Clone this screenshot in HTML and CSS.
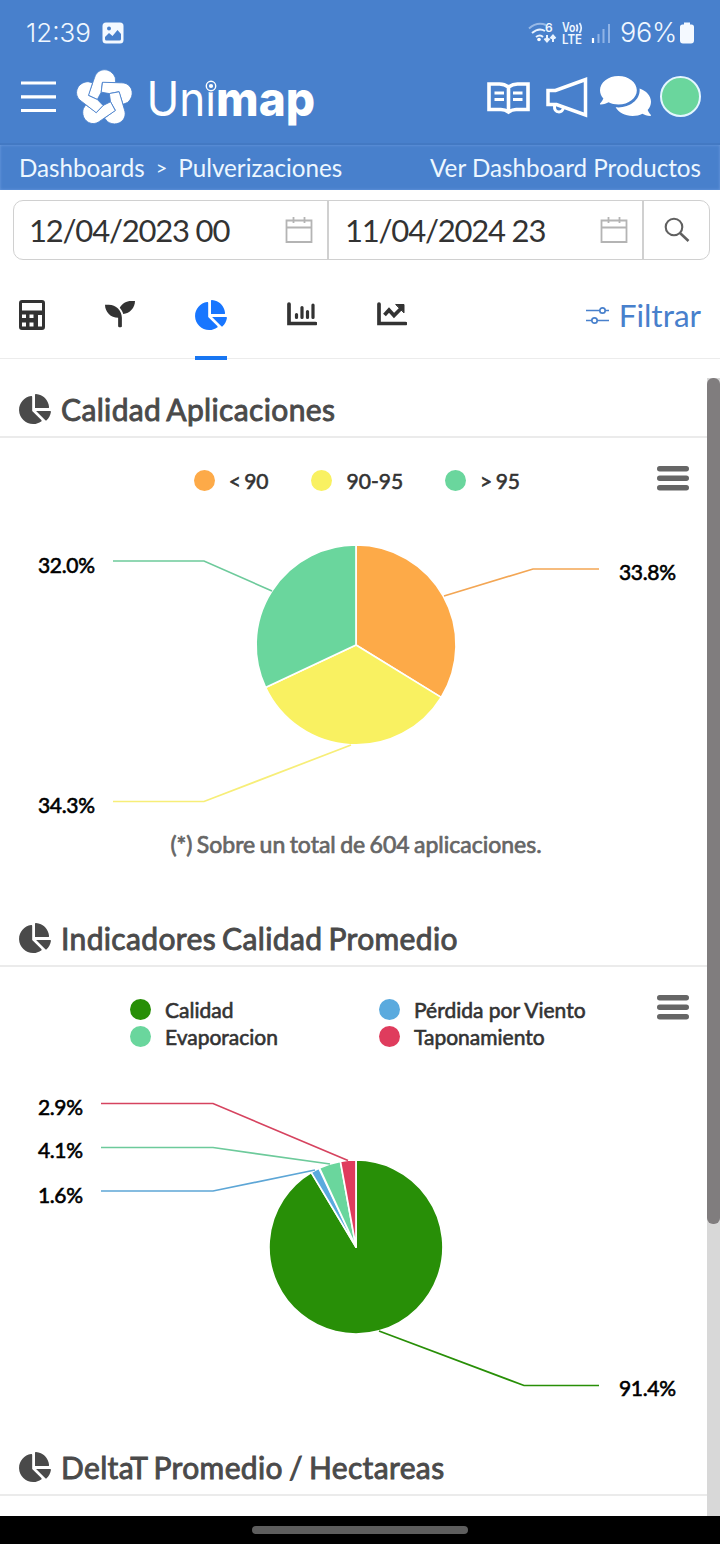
FILE: index.html
```html
<!DOCTYPE html>
<html lang="es">
  <head>
    <meta charset="utf-8" />
    <meta name="viewport" content="width=device-width, initial-scale=1" />
    <title>Unimap | Pulverizaciones</title>
    <link rel="stylesheet" href="styles.css">
  </head>
  <body>
    <!-- Shared icons -->
    <svg class="sprite" width="0" height="0">
      <symbol id="chart-pie" viewBox="0 0 544 512">
        <path d="M527.79 288H290.5l158.03 158.03c6.04 6.04 15.98 6.53 22.19.68 38.7-36.46 65.32-85.61 73.13-140.86 1.34-9.46-6.51-17.85-16.06-17.85zm-15.83-64.8C503.72 103.74 408.26 8.28 288.8.04 279.68-.59 272 7.1 272 16.24V240h223.77c9.14 0 16.82-7.68 16.19-16.8zM224 288V50.71c0-9.55-8.39-17.4-17.84-16.06C86.99 51.49-4.1 155.6.14 280.37 4.5 408.51 114.83 513.59 243.03 511.98c50.4-.63 96.97-16.87 135.26-44.03 7.9-5.6 8.42-17.23 1.57-24.08L224 288z" />
      </symbol>
      <symbol id="calendar" viewBox="0 0 28 28">
        <path d="M1.5 4.5h25v21.5h-25zM1.5 11.500h25M8.500 1v6M19.500 1v6" fill="none" stroke="#b4b4b4" stroke-width="1.8" />
      </symbol>
      <symbol id="bars" viewBox="0 0 32 25">
        <path d="M2.7 2.8h26.6M2.7 12.300h26.6M2.7 21.700h26.6" stroke="#666" stroke-width="5.4" stroke-linecap="round" />
      </symbol>
    </svg>

    <!-- Phone status bar -->
    <div class="status-bar">
      <span class="clock">12:39</span>
      <svg class="picture-icon" width="22" height="22" viewBox="0 0 22 22">
        <rect x=".5" y=".5" width="21" height="21" rx="3.5" fill="#f4f9ff" />
        <circle cx="7" cy="6.5" r="2" fill="#4880cc" />
        <path d="M3 17v-2l4-4 3.500 3 5-6 3.500 4v5q0 1.500-1.500 1.500h-13Q3 18.500 3 17z" fill="#4880cc" />
      </svg>
      <svg class="signals" width="86" height="26" viewBox="0 0 86 26">
        <g fill="none" stroke="#e8f2ff" stroke-width="2">
          <path d="M1 8.500Q9 1.500 18 5" opacity=".5" />
          <path d="M4 13q7-6 13-2M8 17q4-3 7 0" />
          <path d="M19 15v6M16.500 18.500l2.500 3 2.500-3M25 22v-6M22.500 18.500l2.500-3 2.500 3" />
          <path d="M48.500 4.500q2 3.500 0 7M51.500 3q3.500 5 0 10" stroke-width="1.7" />
        </g>
        <circle cx="11" cy="19.5" r="1.8" fill="#fff" />
        <g class="tiny">
          <text x="17" y="12" font-size="12">6</text>
          <text x="34" y="12" font-size="12.5" textLength="13.500" lengthAdjust="spacingAndGlyphs">Vo</text>
          <text x="34" y="24" font-size="12.5" textLength="20" lengthAdjust="spacingAndGlyphs">LTE</text>
        </g>
        <path d="M65 18v5" stroke="#fff" stroke-width="2.2" />
        <path d="M70.500 14v9M75.500 9v14M81 4v19" stroke="#8fb3e6" stroke-width="2" />
      </svg>
      <span class="battery">96%</span>
      <svg class="battery-icon" width="16" height="22" viewBox="0 0 16 22">
        <path d="M5 .5h6v2h1.500q2.500 0 2.500 2.500v13.500q0 3-3 3h-8q-3 0-3-3V5q0-2.500 2.500-2.500H5z" fill="#f4f9ff" />
      </svg>
    </div>

    <!-- App header -->
    <header class="header">
      <svg class="menu-icon" width="35" height="32" viewBox="0 0 35 32">
        <path d="M0 2h35M0 15.800h35M0 29.500h35" stroke="#fff" stroke-width="3.2" />
      </svg>
      <svg class="logo" width="250" height="64" viewBox="0 0 250 64">
        <defs>
          <path id="lobe" d="M-48-10L-29-63C-20-94 21-94 33-62L34-48-6-48-9.300-19-21 3z" />
        </defs>
        <g transform="translate(34.300 32.500) scale(.3333)" fill="#fff" stroke="#4880cc" stroke-width="2.4" stroke-linejoin="round">
          <use href="#lobe" />
          <use href="#lobe" transform="rotate(72)" />
          <use href="#lobe" transform="rotate(144)" />
          <use href="#lobe" transform="rotate(216)" />
          <use href="#lobe" transform="rotate(288)" />
        </g>
        <g class="brand">
          <text x="76.5" y="50" font-weight="400" textLength="69.5" lengthAdjust="spacingAndGlyphs">Uni</text>
          <text x="146" y="50" font-weight="800" textLength="99" lengthAdjust="spacingAndGlyphs">map</text>
        </g>
        <circle cx="141" cy="20" r="6.5" fill="#4880cc" />
        <circle cx="141" cy="20" r="4.7" fill="none" stroke="#fff" stroke-width="1.4" />
        <circle cx="141" cy="20" r="2.1" fill="#fff" />
      </svg>
      <div class="header-actions">
        <svg class="book" width="43" height="34" viewBox="0 0 43 34" fill="none" stroke="#fff" stroke-width="3.6">
          <path d="M21.500 31q-4-3-9-2.500H2V3h10.500q5 0 9 3 4-3 9-3H41v25.500H30.500q-5-.5-9 2.500zM21.500 6v24" />
          <path d="M7.500 12H17M7.500 18.500H17M26 12h9.500M26 18.500h9.500" stroke-width="2.8" />
        </svg>
        <svg width="42" height="42" viewBox="0 0 42 42" fill="none" stroke="#fff" stroke-width="3.5">
          <path d="M2 14.500h7.500L39.500 3.500v35.500L10.500 28.500H2z" />
          <path d="M8.500 29q-.5 7 4.500 7 3.500 0 4.500-4.500" stroke-width="3" />
        </svg>
        <svg class="comments" width="51" height="40" viewBox="0 32 576 448" preserveAspectRatio="none">
          <path fill="#fff" d="M416 192c0-88.400-93.100-160-208-160S0 103.600 0 192c0 34.300 14.100 65.900 38 92-13.400 30.200-35.500 54.200-35.800 54.500-2.200 2.300-2.800 5.700-1.500 8.700S4.800 352 8 352c36.600 0 66.900-12.300 88.700-25 32.200 15.700 70.300 25 111.300 25 114.900 0 208-71.600 208-160zm122 220c23.900-26 38-57.700 38-92 0-66.900-53.500-124.200-129.300-148.100.9 6.600 1.300 13.300 1.300 20.100 0 105.900-107.700 192-240 192-10.800 0-21.300-.8-31.700-1.900C207.800 439.600 281.800 480 368 480c41 0 79.100-9.200 111.300-25 21.800 12.700 52.100 25 88.700 25 3.200 0 6.100-1.900 7.300-4.800 1.300-2.900.7-6.300-1.500-8.700-.3-.3-22.400-24.200-35.800-54.500z" />
        </svg>
        <span class="avatar"></span>
      </div>
    </header>

    <!-- Breadcrumb -->
    <nav class="breadcrumb">
      <span>Dashboards</span>
      <span class="separator">&gt;</span>
      <span>Pulverizaciones</span>
      <a class="breadcrumb-link">Ver Dashboard Productos</a>
    </nav>

    <!-- Date range -->
    <div class="date-range">
      <div class="date-field">
        <span>12/04/2023 00</span>
        <svg width="28" height="28"><use href="#calendar" /></svg>
      </div>
      <div class="date-field">
        <span>11/04/2024 23</span>
        <svg width="28" height="28"><use href="#calendar" /></svg>
      </div>
      <div class="search-button">
        <svg width="26" height="26" viewBox="0 0 26 26" fill="none" stroke="#606060" stroke-width="2.1">
          <circle cx="10" cy="10" r="8.3" />
          <path d="M16 16l8.500 8" stroke-width="2.6" />
        </svg>
      </div>
    </div>

    <!-- Tabs -->
    <div class="tabs">
      <div class="tab">
        <svg width="32" height="32" viewBox="0 0 32 32">
          <path fill="#333" fill-rule="evenodd" d="M5 1h20q3 0 3 3v24q0 3-3 3H5q-3 0-3-3V4q0-3 3-3zm0 3v7.500h20V4zm0 11.500V19h4v-3.500zm7.500 0V19h4v-3.500zM5 23.500v4h4v-4zm7.500 0v4h4v-4zM21 16v11.500h4V16z" />
        </svg>
      </div>
      <div class="tab">
        <svg width="30" height="30" viewBox="0 0 512 512">
          <path fill="#333" d="M64 96H0c0 123.700 100.300 224 224 224v144c0 8.800 7.200 16 16 16h32c8.800 0 16-7.200 16-16V320C288 196.300 187.700 96 64 96zm384-64c-84.200 0-157.400 46.500-195.700 115.200 27.700 30.200 48.200 66.900 59 107.600C424 243.100 512 147.900 512 32h-64z" />
        </svg>
      </div>
      <div class="tab active">
        <svg width="32" height="30"><use href="#chart-pie" /></svg>
      </div>
      <div class="tab">
        <svg width="30" height="30" viewBox="0 0 30 30" fill="none" stroke="#333" stroke-width="3.7" stroke-linecap="round">
          <path d="M2 5v19.500h26.500" />
          <path d="M9.500 15.500v3M15 8.500v10M20.500 12.500v6M26 6v12.500" stroke-width="3.2" />
        </svg>
      </div>
      <div class="tab">
        <svg width="30" height="30" viewBox="0 0 30 30" fill="none" stroke="#333" stroke-width="3.7" stroke-linecap="round">
          <path d="M2 5v19.500h26.500" />
          <path d="M7.500 16l4.500-5 5 5.500 8-8" stroke-linecap="butt" />
          <path d="M19 5.500h8v8z" fill="#333" stroke-width="1" />
        </svg>
      </div>
      <div class="filter">
        <svg width="24" height="20" viewBox="0 0 24 20" fill="none" stroke="#4880cc" stroke-width="1.7">
          <path d="M0 5.500h13.500M19.500 5.500H23M0 15.500h5.500M11.500 15.500H23" />
          <circle cx="16.5" cy="5.5" r="2.7" />
          <circle cx="8.5" cy="15.5" r="2.7" />
        </svg>
        <span>Filtrar</span>
      </div>
    </div>

    <!-- Scrollable content -->
    <main class="content">
      <div class="sections">
        <section class="section">
          <h2 class="section-title">
            <svg width="32" height="30"><use href="#chart-pie" /></svg>
            <span>Calidad Aplicaciones</span>
          </h2>
          <div class="chart-head">
            <ul class="legend legend-row">
              <li><i class="dot orange"></i>&lt; 90</li>
              <li><i class="dot yellow"></i>90-95</li>
              <li><i class="dot mint"></i>&gt; 95</li>
            </ul>
            <svg class="chart-menu" width="32" height="25"><use href="#bars" /></svg>
          </div>
          <svg class="chart" width="707" height="308" viewBox="0 522 707 308">
            <g stroke="#fff" stroke-width="1.7" stroke-linejoin="round">
              <path d="M356 645V545A100 100 0 0 1 441.200 697.400z" fill="#fdaa48" />
              <path d="M356 645L441.200 697.400A100 100 0 0 1 265.500 687.400z" fill="#f9f161" />
              <path d="M356 645L265.500 687.400A100 100 0 0 1 356 545z" fill="#6ad69d" />
            </g>
            <g fill="none" stroke-width="1.7">
              <path d="M444 596l89-27h66" stroke="#f3a654" />
              <path d="M113 561h91l68 30" stroke="#6dca9b" />
              <path d="M113 801.500h91L351 745" stroke="#f7ee78" />
            </g>
            <g class="chart-label">
              <text x="38" y="572.5" textLength="57">32.0%</text>
              <text x="619" y="580" textLength="57">33.8%</text>
              <text x="38" y="812.5" textLength="57">34.3%</text>
            </g>
          </svg>
          <p class="note">(*) Sobre un total de 604 aplicaciones.</p>
        </section>

        <section class="section">
          <h2 class="section-title">
            <svg width="32" height="30"><use href="#chart-pie" /></svg>
            <span>Indicadores Calidad Promedio</span>
          </h2>
          <div class="chart-head">
            <ul class="legend legend-grid">
              <li><i class="dot green"></i>Calidad</li>
              <li><i class="dot blue"></i>Pérdida por Viento</li>
              <li><i class="dot mint"></i>Evaporacion</li>
              <li><i class="dot red"></i>Taponamiento</li>
            </ul>
            <svg class="chart-menu" width="32" height="25"><use href="#bars" /></svg>
          </div>
          <svg class="chart" width="707" height="360" viewBox="0 1051 707 360">
            <g stroke="#fff" stroke-width="1.7" stroke-linejoin="round">
              <path d="M356 1247V1160A87 87 0 1 1 311.200 1172.400z" fill="#288f07" />
              <path d="M356 1247L311.200 1172.400A87 87 0 0 1 319 1168.300z" fill="#5aaade" />
              <path d="M356 1247L319.500 1168A87 87 0 0 1 340.400 1161.400z" fill="#6ad69d" />
              <path d="M356 1247L340.400 1161.400A87 87 0 0 1 356 1160z" fill="#df3c5d" />
            </g>
            <g fill="none" stroke-width="1.7">
              <path d="M101 1103.500h112L348 1160.500" stroke="#d6435f" />
              <path d="M101 1147.500h112L330 1164" stroke="#6dca9b" />
              <path d="M101 1191h112l102-21" stroke="#5da6d6" />
              <path d="M379 1331l145 54.500h75" stroke="#288f07" />
            </g>
            <g class="chart-label">
              <text x="38" y="1114.5" textLength="45">2.9%</text>
              <text x="38" y="1158" textLength="45">4.1%</text>
              <text x="38" y="1203" textLength="45">1.6%</text>
              <text x="619" y="1396" textLength="57">91.4%</text>
            </g>
          </svg>
        </section>

        <section class="section">
          <h2 class="section-title">
            <svg width="32" height="30"><use href="#chart-pie" /></svg>
            <span>DeltaT Promedio / Hectareas</span>
          </h2>
        </section>
      </div>
      <div class="scrollbar"><div class="thumb"></div></div>
    </main>

    <!-- Phone navigation bar -->
    <div class="gesture-bar"><span></span></div>
  </body>
</html>
```

FILE: styles.css
```css
* {
  box-sizing: border-box;
}

body {
  display: flex;
  flex-direction: column;
  width: 720px;
  height: 1544px;
  margin: 0;
  overflow: hidden;
  background: #fff;
  font-family: Lato, sans-serif;
  color: #333;
}

svg {
  display: block;
  flex: none;
}

.sprite {
  position: absolute;
}

/* Phone status bar */
.status-bar {
  display: flex;
  align-items: center;
  height: 64px;
  padding: 1px 25px 0 26px;
  background: #4880cc;
  color: #f0f7ff;
  font-family: Inter, sans-serif;
  font-size: 26px;
  font-weight: 300;
}

.clock {
  width: 65px;
}

.picture-icon {
  margin-left: 11px;
}

.signals {
  margin-left: auto;
}

.tiny {
  fill: #f0f7ff;
  font-family: Inter, sans-serif;
  font-weight: 600;
}

.battery {
  width: 57px;
  margin: 0 2px 0 6px;
  font-size: 27px;
  letter-spacing: -0.2px;
}

/* App header */
.header {
  display: flex;
  align-items: center;
  height: 81px;
  padding: 0 19px 14px 21px;
  background: #4880cc;
  border-bottom: 2px solid #4379c3;
}

.menu-icon {
  margin-top: 1px;
}

.logo {
  margin: 3px 0 0 14px;
}

.brand {
  fill: #fff;
  font-family: Inter, sans-serif;
  font-size: 48px;
}

.header-actions {
  display: flex;
  align-items: center;
  gap: 17px;
  margin-left: auto;
}

.book {
  margin: 3px -1px 0 1px;
}

.comments {
  margin: -2px -8px 0 -5px;
}

.avatar {
  width: 41px;
  height: 41px;
  border: 2px solid #e4f6ff;
  border-radius: 50%;
  background: #6ad69d;
}

/* Breadcrumb */
.breadcrumb {
  display: flex;
  align-items: center;
  height: 45px;
  padding: 0 19px 1px;
  background: #4880cc;
  box-shadow: inset 0 0 3px #6e9cdf;
  color: #edf7ff;
  font-size: 24.2px;
  white-space: nowrap;
}

.separator {
  margin: 0 11px;
  font-size: 20px;
}

.breadcrumb-link {
  margin-left: auto;
}

/* Date range */
.date-range {
  display: flex;
  height: 60px;
  margin: 10px 10px 0 13px;
  border: 1px solid #d0d0d0;
  border-radius: 10px;
}

.date-field {
  display: flex;
  align-items: center;
  justify-content: space-between;
  width: 315px;
  padding: 0 14px 0 15px;
  border-right: 2px solid #d0d0d0;
  font-size: 31px;
  letter-spacing: -1.2px;
}

.date-field + .date-field {
  padding-left: 16px;
}

.search-button {
  display: flex;
  flex: 1;
  align-items: center;
  justify-content: center;
}

/* Tabs */
.tabs {
  display: flex;
  align-items: flex-start;
  height: 99px;
  padding: 0 19px 0 17px;
  border-bottom: 1px solid #ececec;
}

.tab {
  padding-top: 39px;
}

.tab + .tab {
  margin-left: 60px;
}

.tab:nth-child(2) {
  margin-left: 56px;
}

.active {
  height: 100px;
  padding-top: 40px;
  border-bottom: 4px solid #1876f2;
  fill: #1876ff;
}

.filter {
  display: flex;
  align-items: center;
  gap: 9px;
  margin-left: auto;
  padding-top: 36px;
  color: #4880cc;
  font-size: 31.5px;
}

/* Scrollable content */
.content {
  display: flex;
  height: 1138px;
  margin-top: 19px;
  overflow: hidden;
}

.sections {
  width: 707px;
}

.section {
  height: 529px;
}

.section-title {
  display: flex;
  align-items: center;
  gap: 10px;
  height: 60px;
  margin: 0;
  padding: 4px 19px 0;
  border-bottom: 2px solid #ebebeb;
  color: #4a4a4a;
  fill: #4a4a4a;
  font-size: 30px;
  font-weight: 400;
  letter-spacing: 0.36px;
  word-spacing: -2px;
  -webkit-text-stroke: 0.9px;
}

.chart-head {
  display: flex;
  align-items: flex-start;
  justify-content: flex-end;
  height: 84px;
  padding: 28px 18px 0 0;
}

.legend {
  display: flex;
  margin: 1px 0 0;
  padding: 0;
  list-style: none;
  font-size: 21px;
  line-height: 27px;
  -webkit-text-stroke: 0.6px;
}

.legend li {
  display: flex;
  align-items: center;
}

.legend-row {
  gap: 42px;
  margin-right: 137px;
  word-spacing: -2px;
}

.legend-row .yellow {
  margin-right: 15px;
}

.legend-grid {
  display: grid;
  grid-template-columns: 249px 207px;
  margin-right: 71px;
}

.dot {
  width: 21px;
  height: 21px;
  margin-right: 14px;
  border-radius: 50%;
}

.orange {
  background: #fdaa48;
}

.yellow {
  background: #f9f161;
}

.mint {
  background: #6ad69d;
}

.green {
  background: #288f07;
}

.blue {
  background: #5aaade;
}

.red {
  background: #df3c5d;
}

.chart-label {
  fill: #000;
  font-size: 21px;
  stroke: #000;
  stroke-width: 0.6px;
}

.note {
  margin: 0;
  padding-left: 5px;
  color: #666;
  font-size: 23px;
  line-height: 28px;
  text-align: center;
  word-spacing: -1.5px;
  -webkit-text-stroke: 0.7px;
}

.scrollbar {
  width: 13px;
  background: #d8d8d8;
}

.thumb {
  height: 846px;
  border-radius: 6px;
  background: #807d7e;
}

/* Phone navigation bar */
.gesture-bar {
  display: flex;
  align-items: center;
  justify-content: center;
  height: 28px;
  background: #000;
}

.gesture-bar span {
  width: 216px;
  height: 8px;
  border-radius: 4px;
  background: #5e5e5e;
}
```
